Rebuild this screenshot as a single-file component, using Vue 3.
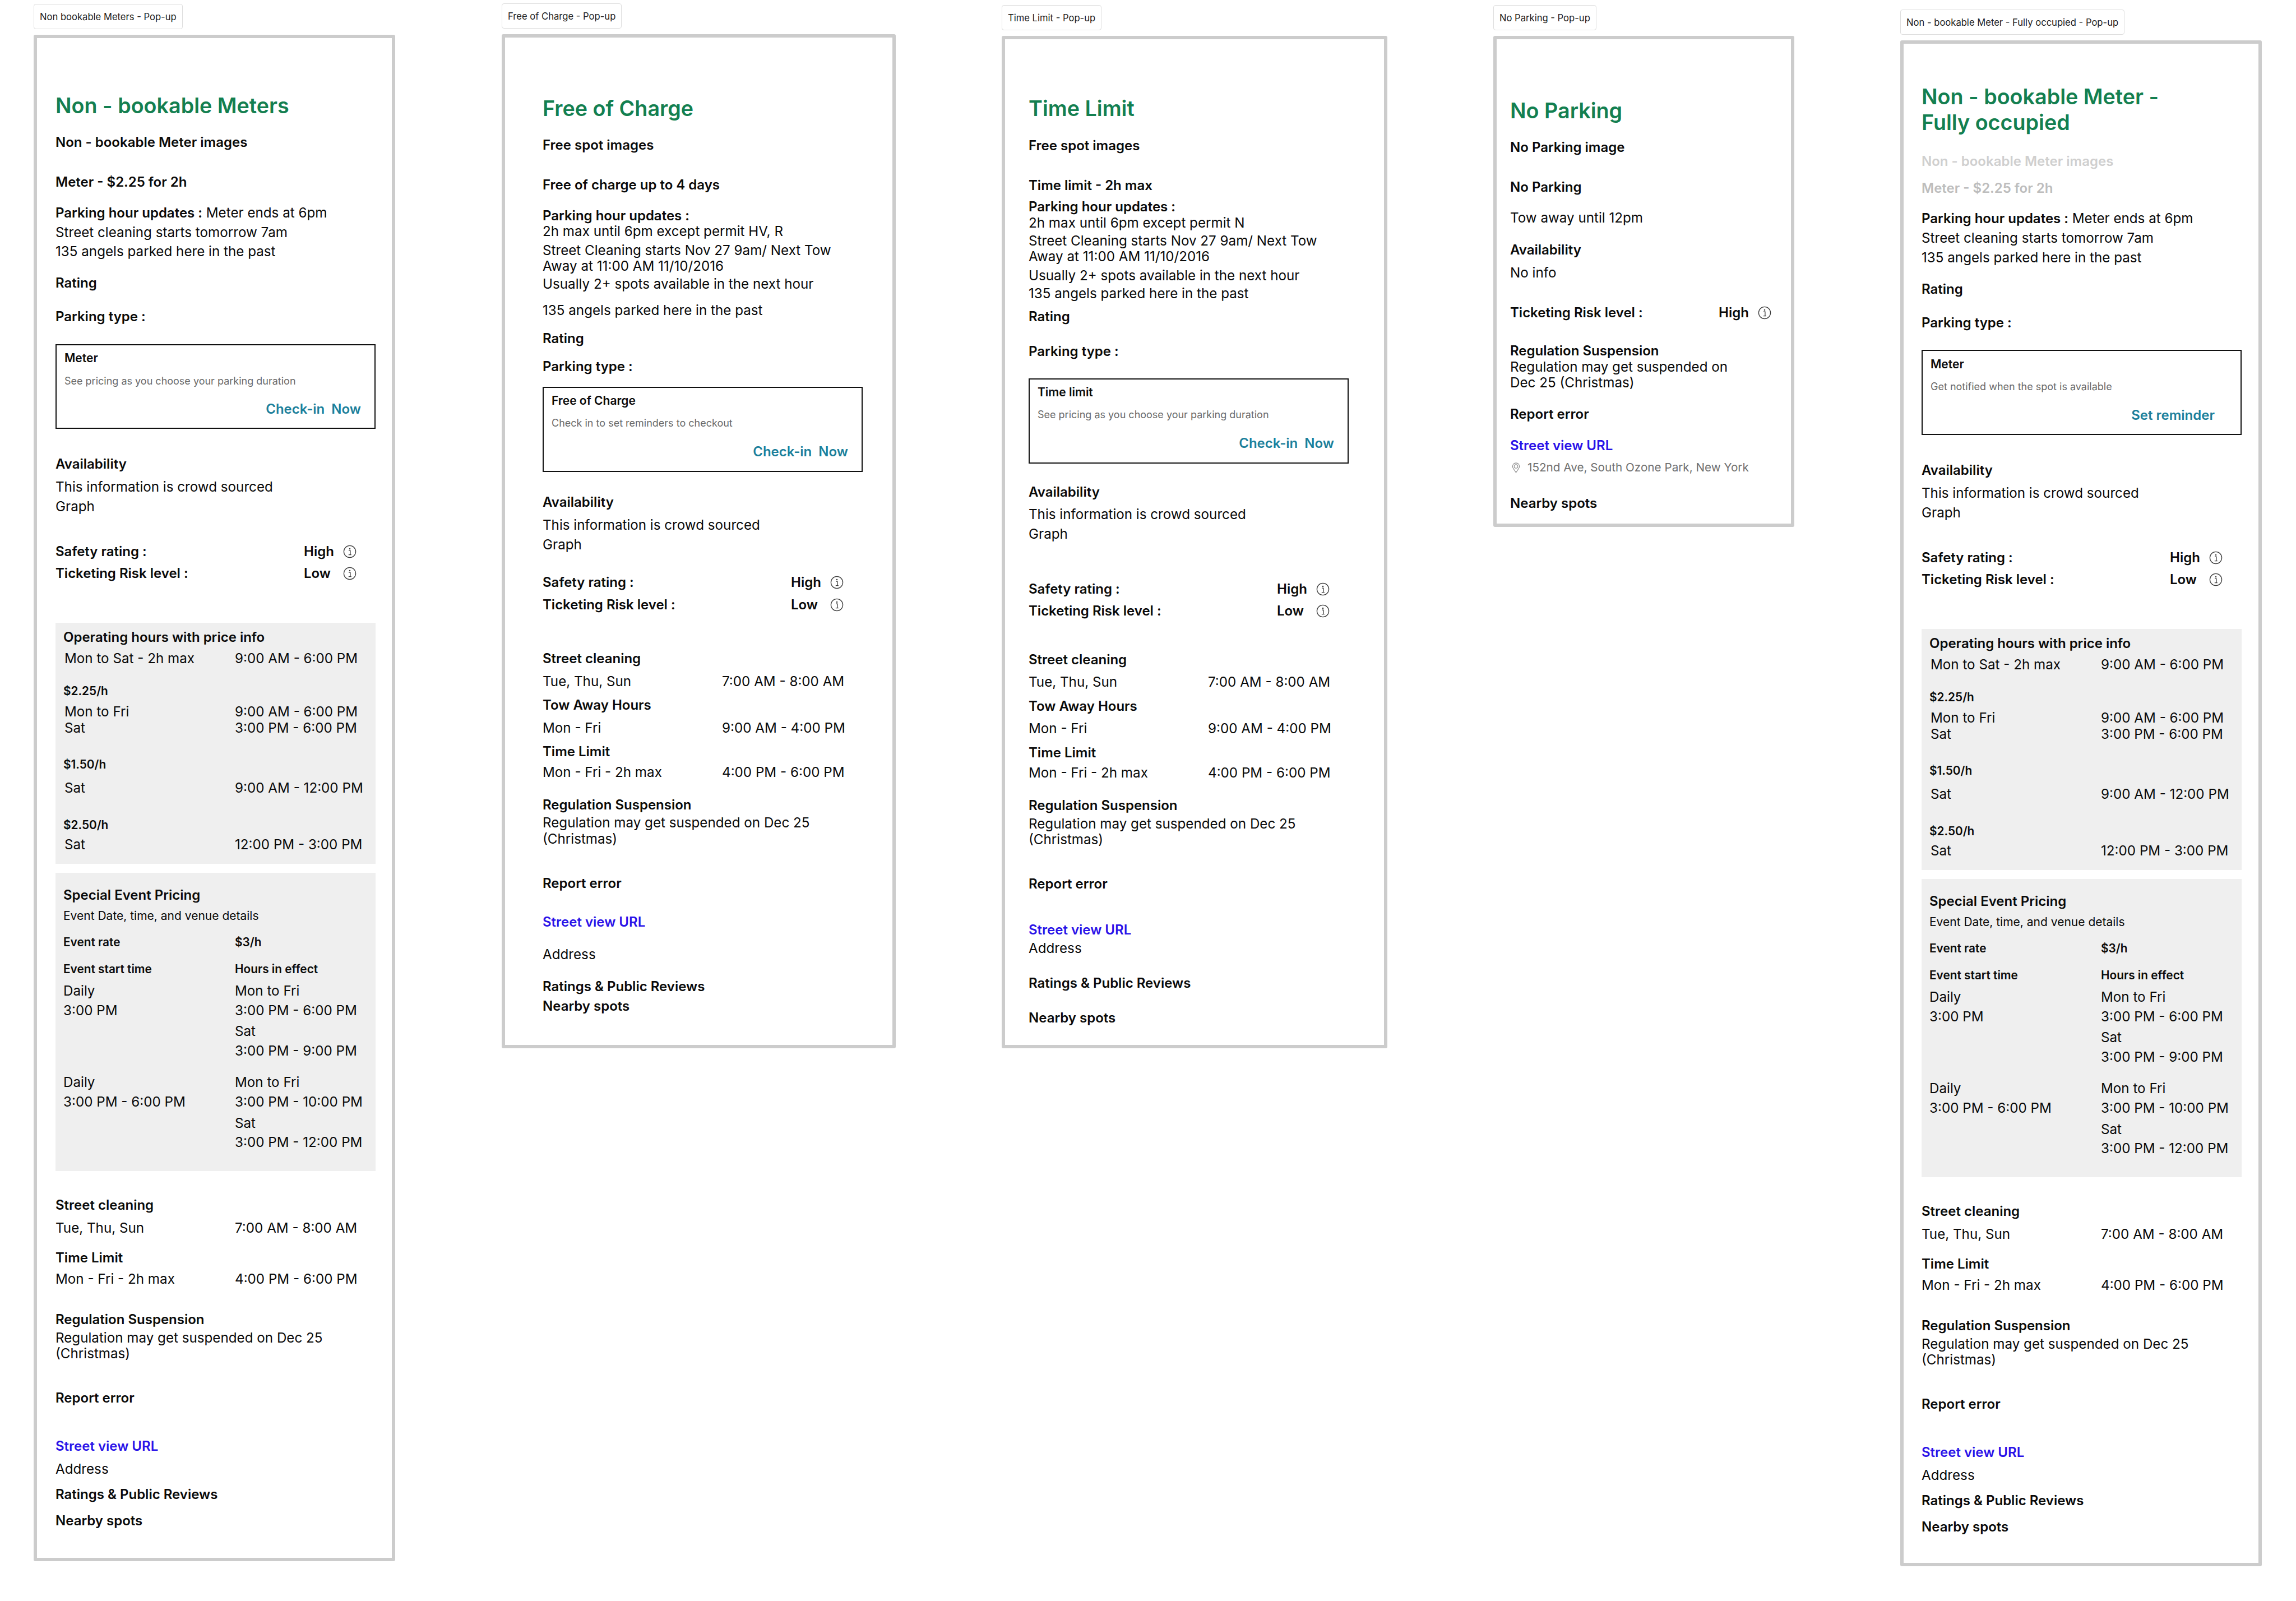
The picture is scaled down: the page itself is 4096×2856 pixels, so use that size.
<script setup>
const LH = { title: 46 }

const risk = (y, l, rt) => ({ y, k: 'b', l, rt, icon: true, riskRow: true })
const R = (y, k, l, rt, extra) => ({ y, k, l, rt, ...extra })

function meterMiddle(d) {
  return [
    R(828 + d, 'b', 'Availability'),
    R(869 + d, 't', 'This information is crowd sourced'),
    R(904 + d, 't', 'Graph'),
    risk(984 + d, 'Safety rating :', 'High'),
    risk(1023 + d, 'Ticketing Risk level :', 'Low'),
    {
      g: 'gray', top: 1111 + d, bottom: 1541 + d, rows: [
        R(1137 + d, 'b', 'Operating hours with price info'),
        R(1175 + d, 't', 'Mon to Sat - 2h max', '9:00 AM - 6:00 PM', { ind: 2 }),
        R(1233 + d, 's', '$2.25/h'),
        R(1270 + d, 't', 'Mon to Fri', '9:00 AM - 6:00 PM', { ind: 2 }),
        R(1299 + d, 't', 'Sat', '3:00 PM - 6:00 PM', { ind: 2 }),
        R(1364 + d, 's', '$1.50/h'),
        R(1406 + d, 't', 'Sat', '9:00 AM - 12:00 PM', { ind: 2 }),
        R(1472 + d, 's', '$2.50/h'),
        R(1507 + d, 't', 'Sat', '12:00 PM - 3:00 PM', { ind: 2 })
      ]
    },
    {
      g: 'gray', top: 1557 + d, bottom: 2089 + d, rows: [
        R(1597 + d, 'b', 'Special Event Pricing'),
        R(1634 + d, 'sm', 'Event Date, time, and venue details'),
        R(1681 + d, 's', 'Event rate', '$3/h'),
        R(1729 + d, 's', 'Event start time', 'Hours in effect'),
        R(1768 + d, 't', 'Daily', 'Mon to Fri'),
        R(1803 + d, 't', '3:00 PM', '3:00 PM - 6:00 PM'),
        R(1840 + d, 't', '', 'Sat'),
        R(1875 + d, 't', '', '3:00 PM - 9:00 PM'),
        R(1931 + d, 't', 'Daily', 'Mon to Fri'),
        R(1966 + d, 't', '3:00 PM - 6:00 PM', '3:00 PM - 10:00 PM'),
        R(2004 + d, 't', '', 'Sat'),
        R(2038 + d, 't', '', '3:00 PM - 12:00 PM')
      ]
    },
    R(2150 + d, 'b', 'Street cleaning'),
    R(2191 + d, 't', 'Tue, Thu, Sun', '7:00 AM - 8:00 AM'),
    R(2244 + d, 'b', 'Time Limit'),
    R(2282 + d, 't', 'Mon - Fri - 2h max', '4:00 PM - 6:00 PM'),
    R(2354 + d, 'b', 'Regulation Suspension'),
    R(2387 + d, 't', 'Regulation may get suspended on Dec 25'),
    R(2415 + d, 't', '(Christmas)'),
    R(2494 + d, 'b', 'Report error'),
    R(2580 + d, 'link', 'Street view URL'),
    R(2621 + d, 't', 'Address'),
    R(2666 + d, 'b', 'Ratings & Public Reviews'),
    R(2713 + d, 'b', 'Nearby spots')
  ]
}

const card = (top, bottom, ys, label, sub, cta, far) => ({
  g: 'card', top, bottom, rows: [
    R(ys[0], 'label', label),
    R(ys[1], 'sub', sub),
    R(ys[2], 'cta', cta, null, { off: far ? 'far' : '' })
  ]
})

const spec = [
  {
    tag: 'Non bookable Meters - Pop-up', x: 60, top: 62, bottom: 2785, width: 645, base: 99, rows: [
      R(188, 'title', 'Non - bookable Meters'),
      R(254, 'b', 'Non - bookable Meter images'),
      R(325, 'b', 'Meter - $2.25 for 2h'),
      R(380, 't', ' Meter ends at 6pm', null, { lead: 'Parking hour updates :' }),
      R(415, 't', 'Street cleaning starts tomorrow 7am'),
      R(449, 't', '135 angels parked here in the past'),
      R(505, 'b', 'Rating'),
      R(565, 'b', 'Parking type :'),
      card(614, 765, [639, 680, 730], 'Meter', 'See pricing as you choose your parking duration', 'Check-in  Now'),
      ...meterMiddle(0)
    ]
  },
  {
    tag: 'Free of Charge - Pop-up', x: 895, top: 61, bottom: 1870, width: 703, base: 968, rows: [
      R(193, 'title', 'Free of Charge'),
      R(259, 'b', 'Free spot images'),
      R(330, 'b', 'Free of charge up to 4 days'),
      R(385, 'b', 'Parking hour updates :'),
      R(413, 't', '2h max until 6pm except permit HV, R'),
      R(447, 't', 'Street Cleaning starts Nov 27 9am/ Next Tow'),
      R(475, 't', 'Away at 11:00 AM 11/10/2016'),
      R(507, 't', 'Usually 2+ spots available in the next hour'),
      R(554, 't', '135 angels parked here in the past'),
      R(604, 'b', 'Rating'),
      R(654, 'b', 'Parking type :'),
      card(690, 842, [715, 755, 806], 'Free of Charge', 'Check in to set reminders to checkout', 'Check-in  Now'),
      R(896, 'b', 'Availability'),
      R(937, 't', 'This information is crowd sourced'),
      R(972, 't', 'Graph'),
      risk(1039, 'Safety rating :', 'High'),
      risk(1079, 'Ticketing Risk level :', 'Low'),
      R(1175, 'b', 'Street cleaning'),
      R(1216, 't', 'Tue, Thu, Sun', '7:00 AM - 8:00 AM'),
      R(1258, 'b', 'Tow Away Hours'),
      R(1299, 't', 'Mon - Fri', '9:00 AM - 4:00 PM'),
      R(1341, 'b', 'Time Limit'),
      R(1378, 't', 'Mon - Fri - 2h max', '4:00 PM - 6:00 PM'),
      R(1436, 'b', 'Regulation Suspension'),
      R(1468, 't', 'Regulation may get suspended on Dec 25'),
      R(1497, 't', '(Christmas)'),
      R(1576, 'b', 'Report error'),
      R(1645, 'link', 'Street view URL'),
      R(1703, 't', 'Address'),
      R(1760, 'b', 'Ratings & Public Reviews'),
      R(1795, 'b', 'Nearby spots')
    ]
  },
  {
    tag: 'Time Limit - Pop-up', x: 1787, top: 64, bottom: 1870, width: 688, base: 1835, rows: [
      R(193, 'title', 'Time Limit'),
      R(260, 'b', 'Free spot images'),
      R(331, 'b', 'Time limit - 2h max'),
      R(369, 'b', 'Parking hour updates :'),
      R(398, 't', '2h max until 6pm except permit N'),
      R(430, 't', 'Street Cleaning starts Nov 27 9am/ Next Tow'),
      R(458, 't', 'Away at 11:00 AM 11/10/2016'),
      R(492, 't', 'Usually 2+ spots available in the next hour'),
      R(524, 't', '135 angels parked here in the past'),
      R(565, 'b', 'Rating'),
      R(627, 'b', 'Parking type :'),
      card(675, 827, [700, 740, 791], 'Time limit', 'See pricing as you choose your parking duration', 'Check-in  Now'),
      R(878, 'b', 'Availability'),
      R(918, 't', 'This information is crowd sourced'),
      R(953, 't', 'Graph'),
      risk(1051, 'Safety rating :', 'High'),
      risk(1090, 'Ticketing Risk level :', 'Low'),
      R(1177, 'b', 'Street cleaning'),
      R(1217, 't', 'Tue, Thu, Sun', '7:00 AM - 8:00 AM'),
      R(1260, 'b', 'Tow Away Hours'),
      R(1300, 't', 'Mon - Fri', '9:00 AM - 4:00 PM'),
      R(1343, 'b', 'Time Limit'),
      R(1379, 't', 'Mon - Fri - 2h max', '4:00 PM - 6:00 PM'),
      R(1437, 'b', 'Regulation Suspension'),
      R(1470, 't', 'Regulation may get suspended on Dec 25'),
      R(1498, 't', '(Christmas)'),
      R(1577, 'b', 'Report error'),
      R(1659, 'link', 'Street view URL'),
      R(1692, 't', 'Address'),
      R(1754, 'b', 'Ratings & Public Reviews'),
      R(1816, 'b', 'Nearby spots')
    ]
  },
  {
    tag: 'No Parking - Pop-up', x: 2664, top: 64, bottom: 940, width: 537, base: 2694, highCol: 372, iconX: 454, rows: [
      R(197, 'title', 'No Parking'),
      R(263, 'b', 'No Parking image'),
      R(334, 'b', 'No Parking'),
      R(389, 't', 'Tow away until 12pm'),
      R(446, 'b', 'Availability'),
      R(487, 't', 'No info'),
      risk(558, 'Ticketing Risk level :', 'High'),
      R(626, 'b', 'Regulation Suspension'),
      R(655, 't', 'Regulation may get suspended on'),
      R(683, 't', 'Dec 25 (Christmas)'),
      R(739, 'b', 'Report error'),
      R(795, 'link', 'Street view URL'),
      R(834, 'addr', '152nd Ave, South Ozone Park, New York'),
      R(898, 'b', 'Nearby spots')
    ]
  },
  {
    tag: 'Non - bookable Meter - Fully occupied - Pop-up', x: 3390, top: 72, bottom: 2794, width: 645, base: 3428, rows: [
      R(172, 'title', 'Non - bookable Meter -'),
      R(218, 'title', 'Fully occupied'),
      R(288, 'b', 'Non - bookable Meter images', null, { off: 'off1' }),
      R(336, 'b', 'Meter - $2.25 for 2h', null, { off: 'off2' }),
      R(390, 't', ' Meter ends at 6pm', null, { lead: 'Parking hour updates :' }),
      R(425, 't', 'Street cleaning starts tomorrow 7am'),
      R(460, 't', '135 angels parked here in the past'),
      R(516, 'b', 'Rating'),
      R(576, 'b', 'Parking type :'),
      card(624, 776, [650, 690, 741], 'Meter', 'Get notified when the spot is available', 'Set reminder', true),
      ...meterMiddle(11)
    ]
  }
]

const lineHeight = (k) => LH[k] || 24

function layoutRows(rows, cursor, frame, gap) {
  const out = []
  let c = cursor
  for (const r of rows) {
    const lh = lineHeight(r.k)
    const col = r.riskRow ? frame.highCol || 443 : 320
    out.push({
      ...r,
      mt: Math.round(r.y - lh / 2 - c),
      colW: col - gap - (r.ind || 0),
      rw: (frame.iconX || 525) - 12 - col
    })
    c = Math.round(r.y - lh / 2 + lh)
  }
  return { out, c }
}

const frames = spec.map((f) => {
  let cursor = f.top + 6
  const groups = []
  let plain = null
  for (const it of f.rows) {
    if (it.g) {
      plain = null
      const inset = it.g === 'card' ? 2 : 0
      const pad = it.g === 'card' ? 0 : 14
      const { out } = layoutRows(it.rows, it.top + inset, f, pad)
      groups.push({ cls: it.g, mt: it.top - cursor, h: it.bottom - it.top, rows: out })
      cursor = it.bottom
    } else {
      if (!plain) {
        plain = { cls: 'plain', mt: 0, h: null, rows: [] }
        groups.push(plain)
      }
      const { out, c } = layoutRows([it], cursor, f, 0)
      plain.rows.push(out[0])
      cursor = c
    }
  }
  return {
    ...f,
    groups,
    padL: f.base - f.x - 6,
    padB: f.bottom - 6 - cursor
  }
})
</script>

<template>
  <div class="canvas">
    <section
      v-for="f in frames"
      :key="f.tag"
      class="window"
      :style="{ left: f.x + 'px', top: f.top - 55 + 'px', width: f.width + 'px' }"
    >
      <div class="tag">{{ f.tag }}</div>
      <div class="frame" :style="{ paddingLeft: f.padL + 'px', paddingBottom: f.padB + 'px' }">
        <div
          v-for="(g, gi) in f.groups"
          :key="gi"
          class="group"
          :class="g.cls"
          :style="{ marginTop: g.mt + 'px', height: g.h ? g.h + 'px' : 'auto' }"
        >
          <div
            v-for="(r, ri) in g.rows"
            :key="ri"
            class="row"
            :class="[r.k, r.off, { ind: r.ind }]"
            :style="{ marginTop: r.mt + 'px' }"
          >
            <svg v-if="r.k === 'addr'" class="pin" viewBox="0 0 20 26" aria-hidden="true">
              <path d="M10 1.2C5.2 1.2 1.6 5 1.6 9.6c0 2 .8 3.8 2 5.3L10 24.6l6.4-9.7c1.2-1.5 2-3.3 2-5.3 0-4.6-3.6-8.4-8.4-8.4Z" />
              <circle cx="10" cy="9.6" r="4.4" />
            </svg>
            <span v-if="r.rt" class="l" :style="{ width: r.colW + 'px' }">{{ r.l }}</span>
            <span v-else class="l"><b v-if="r.lead" class="lead">{{ r.lead }}</b>{{ r.l }}</span>
            <span v-if="r.rt" class="r" :style="r.icon ? { width: r.rw + 'px' } : null">{{ r.rt }}</span>
            <svg v-if="r.icon" class="info" viewBox="0 0 24 24" aria-hidden="true">
              <circle cx="12" cy="12" r="10.6" />
              <path class="glyph" d="M10 10.2h2.9v7.2M9.8 17.6h5" />
              <circle class="dot" cx="12" cy="7" r="1.3" />
            </svg>
          </div>
        </div>
      </div>
    </section>
  </div>
</template>

<style>
html,
body {
  margin: 0;
  background: #fff;
}
</style>

<style scoped>
.canvas {
  position: relative;
  width: 4096px;
  height: 2856px;
  overflow: hidden;
  background: #fff;
  font-family: Inter, "Liberation Sans", sans-serif;
  color: #0a0a0a;
}
.window {
  position: absolute;
  display: flex;
  flex-direction: column;
  align-items: flex-start;
}
.tag {
  box-sizing: border-box;
  height: 45px;
  margin-bottom: 10px;
  padding: 0 10px;
  display: flex;
  align-items: center;
  border: 1px solid #dedede;
  border-radius: 4px;
  font-size: 16.6px;
  color: #222;
  background: #fff;
  white-space: nowrap;
}
.frame {
  box-sizing: border-box;
  width: 100%;
  border: 6px solid #cccccc;
  border-radius: 3px;
  background: #fff;
  overflow: hidden;
  display: flow-root;
}
.group {
  width: 571px;
  box-sizing: border-box;
}
.gray {
  background: #efefef;
  padding: 0 0 0 14px;
  display: flow-root;
}
.card {
  border: 2px solid #111;
  padding: 0 24px 0 14px;
  display: flow-root;
}
.row {
  display: flex;
  align-items: center;
  height: 24px;
  line-height: 24px;
  font-size: 24px;
  white-space: pre;
}
.row .l,
.row .r {
  flex: none;
}
.ind {
  padding-left: 2px;
}
.t {
  font-size: 24.2px;
}
.title {
  height: 46px;
  line-height: 46px;
  font-size: 37.7px;
  font-weight: 600;
  color: #137f50;
}
.b {
  font-weight: 600;
}
.lead {
  font-weight: 600;
  font-size: 24px;
}
.s {
  font-size: 20.8px;
  font-weight: 600;
}
.sm {
  font-size: 21px;
}
.label {
  font-size: 21px;
  font-weight: 600;
}
.sub {
  font-size: 18px;
  color: #6a6a6a;
}
.cta {
  font-weight: 600;
  color: #1b7f9b;
  justify-content: flex-end;
}
.far {
  padding-right: 22px;
}
.link {
  font-weight: 600;
  color: #2a12e8;
}
.addr {
  font-size: 20.7px;
  color: #707070;
}
.off1 {
  color: #cfcfcf;
}
.off2 {
  color: #bdbdbd;
}
.info {
  flex: none;
  width: 24px;
  height: 24px;
  fill: none;
  stroke: #3a3a3a;
  stroke-width: 1.3;
}
.info .dot {
  fill: #3a3a3a;
  stroke: none;
}
.pin {
  flex: none;
  width: 15px;
  height: 19px;
  margin: 0 13px 0 3px;
  fill: none;
  stroke: #8a8a8a;
  stroke-width: 1.5;
}
</style>
